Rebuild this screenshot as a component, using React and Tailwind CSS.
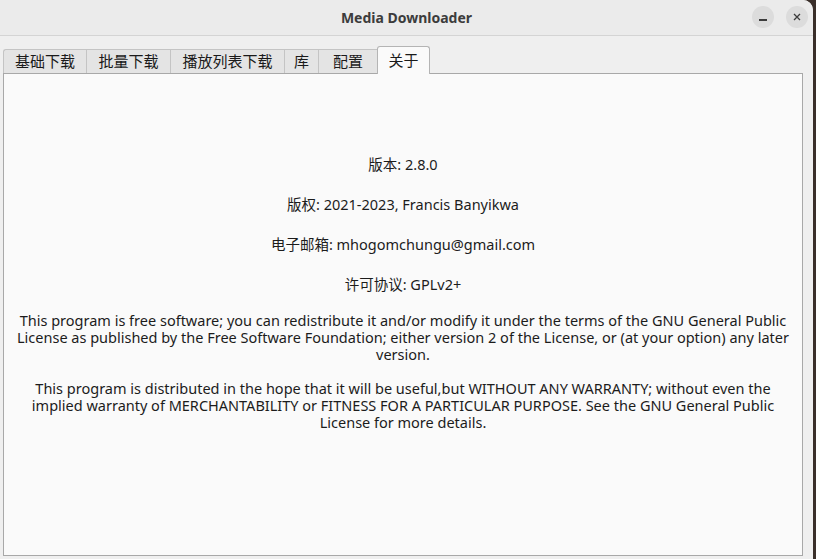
const tabs = [
  { label: "基础下载", w: "w-[83px]" },
  { label: "批量下载", w: "w-[84px]" },
  { label: "播放列表下载", w: "w-[114px]" },
  { label: "库", w: "w-[34px]" },
  { label: "配置", w: "w-[59px]" },
  { label: "关于", w: "w-[53px]" },
];

const font = "font-['Noto_Sans','Noto_Sans_CJK_SC',sans-serif]";

export default function App() {
  return (
    <div className={`h-[559px] w-[816px] overflow-hidden bg-[#3a2f2a] ${font}`}>
      <div className="flex h-full w-[813px] flex-col overflow-hidden rounded-tr-[10px] bg-[#efefef]">
        {/* title bar */}
        <div className="relative flex h-[36px] shrink-0 items-center justify-center border-b border-[#d4d4d4] bg-[#ebebeb]">
          <span className="text-[14px] font-bold text-[#3c3c3c]">Media Downloader</span>
          <div className="absolute right-[5px] top-[6px] flex gap-[12px]">
            <button className="flex h-[22px] w-[22px] items-center justify-center rounded-full bg-[#dcdcdc]">
              <span className="mt-[6px] block h-[1.5px] w-[8px] bg-[#3c3c3c]" />
            </button>
            <button className="flex h-[22px] w-[22px] items-center justify-center rounded-full bg-[#dcdcdc]">
              <svg width="8" height="8" viewBox="0 0 8 8">
                <path d="M1 1 L7 7 M7 1 L1 7" stroke="#3c3c3c" strokeWidth="1.3" />
              </svg>
            </button>
          </div>
        </div>

        {/* body */}
        <div className="flex flex-1 flex-col pb-[3px] pl-[3px] pr-[10px] pt-[10px]">
          <div className="flex h-[27px] items-end">
            {tabs.map((t, i) => {
              const active = i === tabs.length - 1;
              return active ? (
                <div
                  key={t.label}
                  className={`relative z-10 -mb-px flex h-[28px] items-center justify-center rounded-t-[3px] border border-b-0 border-[#b4b4b4] bg-[#fafafa] text-[15px] text-[#1a1a1a] ${t.w}`}
                >
                  {t.label}
                </div>
              ) : (
                <div
                  key={t.label}
                  className={`flex h-[24px] items-center justify-center border border-b-0 border-r-0 border-[#c4c4c4] bg-[#e4e4e4] text-[15px] text-[#1a1a1a] first:rounded-tl-[3px] ${t.w}`}
                >
                  {t.label}
                </div>
              );
            })}
          </div>

          <div className="flex flex-1 flex-col items-center border border-[#a8a8a8] bg-[#fafafa] pt-[82px] text-center text-[14.5px] leading-[17px] text-[#1c1c1c]">
            <p>版本: 2.8.0</p>
            <p className="mt-[23px]">版权: 2021-2023, Francis Banyikwa</p>
            <p className="mt-[23px]">电子邮箱: mhogomchungu@gmail.com</p>
            <p className="mt-[23px]">许可协议: GPLv2+</p>
            <p className="mt-[19px]">
              This program is free software; you can redistribute it and/or modify it under the terms of the GNU General Public
              <br />
              License as published by the Free Software Foundation; either version 2 of the License, or (at your option) any later
              <br />
              version.
            </p>
            <p className="mt-[17px]">
              This program is distributed in the hope that it will be useful,but WITHOUT ANY WARRANTY; without even the
              <br />
              implied warranty of MERCHANTABILITY or FITNESS FOR A PARTICULAR PURPOSE. See the GNU General Public
              <br />
              License for more details.
            </p>
          </div>
        </div>
      </div>
    </div>
  );
}
